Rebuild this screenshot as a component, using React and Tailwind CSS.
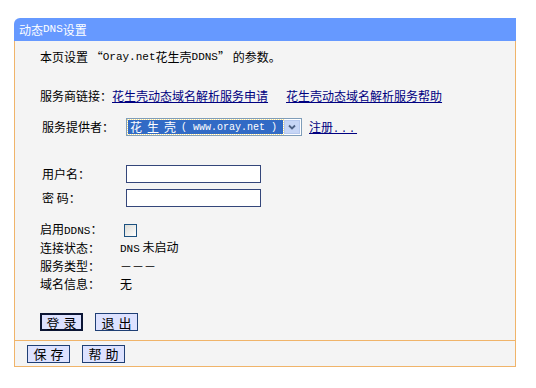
import React from 'react';

const cjk = "font-['Noto_Sans_CJK_SC','Noto_Sans',sans-serif]";
const mono = "font-['Liberation_Mono','DejaVu_Sans_Mono',monospace]";

function Btn({ children, focused }) {
  return (
    <button
      className={
        'h-[18px] w-[43px] flex items-center justify-center bg-[#dde2ff] text-[13px] leading-none text-black tracking-[4px] pl-[4px] ' +
        (focused ? 'border-2 border-[#0c1635]' : 'border border-[#1f3f75]')
      }
    >
      {children}
    </button>
  );
}

function Field() {
  return <div className="w-[135px] h-[18px] border border-[#34467a] bg-white" />;
}

function Row({ label, children, labelClass = '' }) {
  return (
    <div className="flex items-center h-[18px]">
      <div className={'w-[86px] shrink-0 ' + labelClass}>{label}</div>
      {children}
    </div>
  );
}

export default function App() {
  return (
    <div className={'w-[536px] h-[388px] bg-white pt-[18px] pl-[14px] text-[12px] text-black ' + cjk}>
      <div className="w-[502px]">
        {/* title bar */}
        <div className="h-[23px] bg-[#6699ff] rounded-tl-[6px] text-white flex items-center pl-[5px] text-[12px]">
          动态<span className={mono + ' text-[11px]'}>DNS</span>设置
        </div>

        {/* body */}
        <div className="bg-[#f4f4f4] border-x border-b border-[#f0b46a] pl-[25px] pt-[7px] pb-[9px]">
          <div className="h-[18px] flex items-center">
            本页设置 “<span className={mono + ' text-[11px]'}>Oray.net</span>花生壳<span className={mono + ' text-[11px]'}>DDNS</span>” 的参数。
          </div>

          <div className="h-[18px] flex items-center mt-[21px]">
            <span>服务商链接：</span>
            <a href="#" className="text-[#000080] underline">花生壳动态域名解析服务申请</a>
            <a href="#" className="text-[#000080] underline ml-[18px]">花生壳动态域名解析服务帮助</a>
          </div>

          <div className="mt-[13px]">
            <Row label="服务提供者：" labelClass="pl-[2px]">
              <div className="flex items-center">
                <div className="w-[176px] h-[18px] border border-[#7f9db9] bg-white flex items-center p-px">
                  <div className="flex-1 h-full bg-[#316ac5] outline outline-1 outline-dotted outline-[#f5e08a] text-white flex items-center pl-[2px] whitespace-nowrap">
                    <span className="tracking-[5px]">花生壳</span>
                    <span className={mono + ' text-[10px]'}>( www.oray.net )</span>
                  </div>
                  <div className="w-[16px] h-full ml-px bg-[#c7d6f6] border border-[#b6c8ee] flex items-center justify-center">
                    <svg width="8" height="6" viewBox="0 0 8 6">
                      <path d="M1 1.5 L4 4.5 L7 1.5" stroke="#4d6185" strokeWidth="1.8" fill="none" />
                    </svg>
                  </div>
                </div>
                <a href="#" className="text-[#000080] underline ml-[7px]">
                  注册<span className={mono + ' text-[10px] tracking-[2px]'}>...</span>
                </a>
              </div>
            </Row>
          </div>

          <div className="mt-[29px] flex flex-col gap-[6px]">
            <Row label="用户名：" labelClass="pl-[2px]">
              <Field />
            </Row>
            <Row label="密 码：" labelClass="pl-[2px]">
              <Field />
            </Row>
          </div>

          <div className="mt-[14px]">
            <Row label={<span>启用<span className={mono + ' text-[11px]'}>DDNS</span>：</span>}>
              <div className="w-[13px] h-[13px] ml-[-2px] border border-[#1c5180] bg-gradient-to-br from-[#dcdcd7] to-white" />
            </Row>
            <Row label="连接状态：">
              <span className="ml-[-6px]">
                <span className={mono + ' text-[11px]'}>DNS</span> 未启动
              </span>
            </Row>
            <Row label="服务类型：">
              <span className="ml-[-6px]">－－－</span>
            </Row>
            <Row label="域名信息：">
              <span className="ml-[-6px]">无</span>
            </Row>
          </div>

          <div className="flex gap-[12px] mt-[20px]">
            <Btn focused>登录</Btn>
            <Btn>退出</Btn>
          </div>
        </div>

        {/* footer */}
        <div className="bg-[#f4f4f4] border-x border-b border-[#f0b46a] h-[26px] flex items-center gap-[12px] pl-[12px]">
          <Btn>保存</Btn>
          <Btn>帮助</Btn>
        </div>
      </div>
    </div>
  );
}
